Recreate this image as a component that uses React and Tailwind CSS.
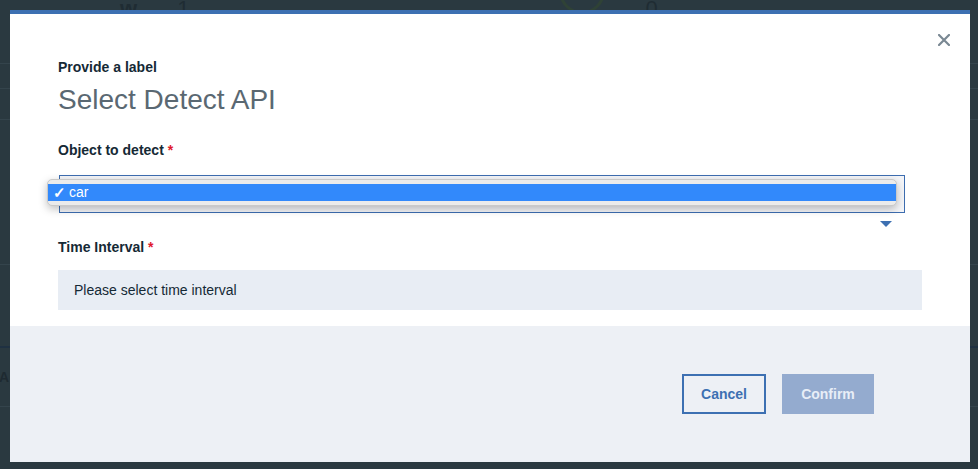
import React from 'react';

const FONT = { fontFamily: '"Liberation Sans", Arial, sans-serif' };

function CloseIcon() {
  return (
    <svg width="12" height="12" viewBox="0 0 12 12" fill="none">
      <path d="M1 1L11 11M11 1L1 11" stroke="#7a8893" strokeWidth="2.2" strokeLinecap="square" />
    </svg>
  );
}

function BackgroundPage() {
  // dimmed page sitting behind the modal
  return (
    <div className="flex flex-col w-full h-full">
      <div className="h-[72px] border-b border-[#34444c] flex items-start gap-[40px] pl-[120px] -mt-[8px]">
        <span className="text-[#1f2c33] text-[22px] font-bold">w</span>
        <span className="text-[#1f2c33] text-[22px]">1</span>
        <div className="ml-[330px] w-[46px] h-[46px] rounded-full border-[3px] border-[#2f4236] -mt-[24px]" />
        <span className="text-[#1f2c33] text-[22px]">0</span>
      </div>
      <div className="h-[25px] border-b border-[#34444c]" />
      <div className="h-[31px] border-b border-[#34444c]" />
      <div className="h-[145px] border-b border-[#34444c]" />
      <div className="h-[83px] border-b-2 border-[#1f3142]" />
      <div className="h-[59px] border-b border-[#34444c] flex items-center">
        <span className="text-[#1e2a31] text-[14px] font-bold -ml-[1px]">A</span>
      </div>
      <div className="flex-1" />
    </div>
  );
}

export default function App() {
  return (
    <div className="relative w-[978px] h-[469px] overflow-hidden bg-[#2a3940]" style={FONT}>
      <BackgroundPage />

      {/* modal overlay */}
      <div className="absolute left-[10px] top-[10px] w-[960px] h-[452px] flex flex-col bg-white border-t-4 border-[#3d70b2]">
        <div className="relative h-[312px] pl-[48px] pr-[48px] pt-[45px]">
          <button className="absolute right-[20px] top-[20px] w-[12px] h-[12px] flex items-center justify-center">
            <CloseIcon />
          </button>

          <p className="text-[14px] leading-[16px] font-bold text-[#152935]">Provide a label</p>
          <h2 className="mt-[9px] text-[28px] leading-[32px] text-[#5a6872]">Select Detect API</h2>

          <p className="mt-[26px] text-[14px] leading-[16px] font-bold text-[#152935]">
            Object to detect <span className="text-[#e0182d]">*</span>
          </p>

          <div className="relative mt-[17px] h-[64px]">
            <div className="ml-[1px] w-[846px] h-[38px] border border-[#3d6db0] bg-[#f4f5f8]" />
            <div className="absolute left-[-11px] top-[4px] w-[850px] h-[27px] rounded-[5px] bg-[#ebebeb] border border-[#c9c9c9] shadow-[0_3px_8px_rgba(0,0,0,0.25)] flex items-center">
              <div className="w-full h-[17px] bg-[#3289fb] flex items-center pl-[5px] text-white text-[14px] leading-[17px]">
                <span className="w-[16px] text-[15px] font-bold">✓</span>
                <span>car</span>
              </div>
            </div>
            <svg className="absolute left-[822px] top-[46px]" width="12" height="6" viewBox="0 0 12 6">
              <path d="M0 0H12L6 6Z" fill="#3d70b2" />
            </svg>
          </div>

          <p className="text-[14px] leading-[16px] font-bold text-[#152935]">
            Time Interval <span className="text-[#e0182d]">*</span>
          </p>
          <div className="mt-[15px] h-[40px] bg-[#e8edf4] flex items-center pl-[16px] text-[14px] text-[#152935]">
            Please select time interval
          </div>
        </div>

        <div className="flex-1 bg-[#edf0f5] flex items-center justify-end gap-[16px] pr-[96px]">
          <button className="w-[84px] h-[40px] border-2 border-[#3d70b2] text-[#3d70b2] text-[14px] font-bold">
            Cancel
          </button>
          <button className="w-[92px] h-[40px] bg-[#94abcf] text-[#e8eef7] text-[14px] font-bold">
            Confirm
          </button>
        </div>
      </div>
    </div>
  );
}
